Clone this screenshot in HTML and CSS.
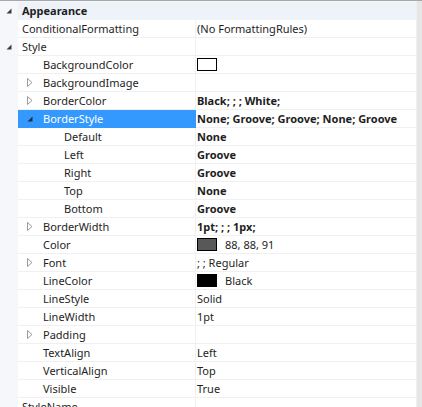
FILE: index.html
```html
<!DOCTYPE html>
<html>
<head>
<meta charset="utf-8">
<link rel="stylesheet" href="styles.css">
</head>
<body>
<div class="frame">
  <div class="grid">
    <div class="row cat">
      <div class="gutter"><svg class="exp" width="6" height="6" viewBox="0 0 6 6"><path d="M5.5 0.5 L5.5 5.5 L0.5 5.5 Z" fill="#3c3c3c"/></svg></div>
      <div class="name b">Appearance</div>
      <div class="value"></div>
    </div>
    <div class="row">
      <div class="gutter"></div>
      <div class="name">ConditionalFormatting</div>
      <div class="value">(No FormattingRules)</div>
    </div>
    <div class="row">
      <div class="gutter"><svg class="exp" width="6" height="6" viewBox="0 0 6 6"><path d="M5.5 0.5 L5.5 5.5 L0.5 5.5 Z" fill="#3c3c3c"/></svg></div>
      <div class="name">Style</div>
      <div class="value"></div>
    </div>
    <div class="row">
      <div class="gutter"></div>
      <div class="name l1"><span class="tw"></span>BackgroundColor</div>
      <div class="value"><span class="sw white"></span></div>
    </div>
    <div class="row">
      <div class="gutter"></div>
      <div class="name l1"><span class="tw"><svg width="6" height="9" viewBox="0 0 6 9"><path d="M0.5 0.5 L5 4.5 L0.5 8.5 Z" fill="none" stroke="#9a9a9a"/></svg></span>BackgroundImage</div>
      <div class="value"></div>
    </div>
    <div class="row">
      <div class="gutter"></div>
      <div class="name l1"><span class="tw"><svg width="6" height="9" viewBox="0 0 6 9"><path d="M0.5 0.5 L5 4.5 L0.5 8.5 Z" fill="none" stroke="#9a9a9a"/></svg></span>BorderColor</div>
      <div class="value b">Black; ; ; White;</div>
    </div>
    <div class="row sel">
      <div class="gutter"></div>
      <div class="name l1"><span class="tw"><svg width="6" height="6" viewBox="0 0 6 6"><path d="M5.5 0.5 L5.5 5.5 L0.5 5.5 Z" fill="#1d2f45"/></svg></span>BorderStyle</div>
      <div class="value b">None; Groove; Groove; None; Groove</div>
    </div>
    <div class="row">
      <div class="gutter"></div>
      <div class="name l2">Default</div>
      <div class="value b">None</div>
    </div>
    <div class="row">
      <div class="gutter"></div>
      <div class="name l2">Left</div>
      <div class="value b">Groove</div>
    </div>
    <div class="row">
      <div class="gutter"></div>
      <div class="name l2">Right</div>
      <div class="value b">Groove</div>
    </div>
    <div class="row">
      <div class="gutter"></div>
      <div class="name l2">Top</div>
      <div class="value b">None</div>
    </div>
    <div class="row">
      <div class="gutter"></div>
      <div class="name l2">Bottom</div>
      <div class="value b">Groove</div>
    </div>
    <div class="row">
      <div class="gutter"></div>
      <div class="name l1"><span class="tw"><svg width="6" height="9" viewBox="0 0 6 9"><path d="M0.5 0.5 L5 4.5 L0.5 8.5 Z" fill="none" stroke="#9a9a9a"/></svg></span>BorderWidth</div>
      <div class="value b">1pt; ; ; 1px;</div>
    </div>
    <div class="row">
      <div class="gutter"></div>
      <div class="name l1"><span class="tw"></span>Color</div>
      <div class="value"><span class="sw gray"></span><span class="swt">88, 88, 91</span></div>
    </div>
    <div class="row">
      <div class="gutter"></div>
      <div class="name l1"><span class="tw"><svg width="6" height="9" viewBox="0 0 6 9"><path d="M0.5 0.5 L5 4.5 L0.5 8.5 Z" fill="none" stroke="#9a9a9a"/></svg></span>Font</div>
      <div class="value">; ; Regular</div>
    </div>
    <div class="row">
      <div class="gutter"></div>
      <div class="name l1"><span class="tw"></span>LineColor</div>
      <div class="value"><span class="sw black"></span><span class="swt">Black</span></div>
    </div>
    <div class="row">
      <div class="gutter"></div>
      <div class="name l1"><span class="tw"></span>LineStyle</div>
      <div class="value">Solid</div>
    </div>
    <div class="row">
      <div class="gutter"></div>
      <div class="name l1"><span class="tw"></span>LineWidth</div>
      <div class="value">1pt</div>
    </div>
    <div class="row">
      <div class="gutter"></div>
      <div class="name l1"><span class="tw"><svg width="6" height="9" viewBox="0 0 6 9"><path d="M0.5 0.5 L5 4.5 L0.5 8.5 Z" fill="none" stroke="#9a9a9a"/></svg></span>Padding</div>
      <div class="value"></div>
    </div>
    <div class="row">
      <div class="gutter"></div>
      <div class="name l1"><span class="tw"></span>TextAlign</div>
      <div class="value">Left</div>
    </div>
    <div class="row">
      <div class="gutter"></div>
      <div class="name l1"><span class="tw"></span>VerticalAlign</div>
      <div class="value">Top</div>
    </div>
    <div class="row">
      <div class="gutter"></div>
      <div class="name l1"><span class="tw"></span>Visible</div>
      <div class="value">True</div>
    </div>
    <div class="row">
      <div class="gutter"></div>
      <div class="name">StyleName</div>
      <div class="value"></div>
    </div>
  </div>
  <div class="scroll"></div>
</div>
</body>
</html>
```

FILE: styles.css
```css
html, body {
  margin: 0;
  padding: 0;
  background: #ffffff;
}
.frame {
  width: 422px;
  height: 407px;
  overflow: hidden;
  display: flex;
  border-top: 1px solid #a8a8a8;
  box-sizing: border-box;
  background: #ffffff;
}
.grid {
  width: 417px;
  padding-top: 1px;
  display: flex;
  flex-direction: column;
  font-family: "Noto Sans", "Open Sans", sans-serif;
  font-size: 11px;
  color: #1e1e1e;
  background: #f5f7fb;
}
.scroll {
  width: 5px;
  margin-left: 0;
  background: #e6e6e6;
  border-left: 1px solid #f0f0f0;
}
.row {
  display: flex;
  height: 18px;
  flex: none;
}
.gutter {
  width: 18px;
  flex: none;
  display: flex;
  align-items: center;
  padding-left: 6px;
  box-sizing: border-box;
}
.name {
  width: 178px;
  flex: none;
  box-sizing: border-box;
  padding-left: 4px;
  display: flex;
  align-items: center;
  white-space: nowrap;
  background: #ffffff;
  border-bottom: 1px solid #f0f0f0;
  border-right: 1px solid #f0f0f0;
  line-height: 17px;
}
.value {
  flex: 1;
  box-sizing: border-box;
  padding-left: 1px;
  display: flex;
  align-items: center;
  white-space: nowrap;
  background: #ffffff;
  border-bottom: 1px solid #f0f0f0;
  line-height: 17px;
}
.cat .name, .cat .value {
  background: #eef3fa;
  border-color: #eef3fa;
}
.b { font-weight: bold; }
.l1 { padding-left: 9px; }
.l2 { padding-left: 46px; }
.tw {
  width: 12px;
  flex: none;
  display: flex;
  align-items: center;
  margin-right: 4px;
}
.sel .name {
  background: #3399ff;
  color: #ffffff;
  border-color: #3399ff;
}
.sw {
  width: 18px;
  height: 11px;
  border: 1px solid #000000;
  flex: none;
}
.sw.white { background: #ffffff; }
.sw.gray { background: #58585b; }
.sw.black { background: #000000; }
.swt { margin-left: 8px; }
```
